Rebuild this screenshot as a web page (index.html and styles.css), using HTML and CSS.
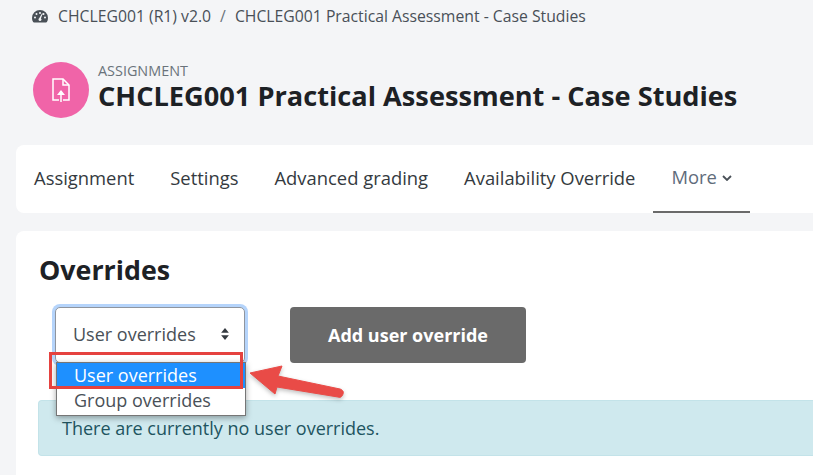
FILE: index.html
```html
<!DOCTYPE html>
<html lang="en">

<head>
    <meta charset="UTF-8">
    <title>Overrides</title>
    <link rel="stylesheet" href="styles.css">
</head>

<body>
    <div class="page">
        <div class="breadcrumb">
            <svg class="crumb-icon" viewBox="0 0 16 14" width="16" height="14">
                <path fill="#495057" fill-rule="evenodd" d="M8 1a8 8 0 0 0-8 8c0 1.500.4 2.900 1.100 4 .2.300.5.500.9.500h12c.4 0 .7-.2.900-.5.700-1.100 1.100-2.500 1.100-4a8 8 0 0 0-8-8zM8 3a1 1 0 1 1 0 2 1 1 0 0 1 0-2zM3 9.500a1 1 0 1 1 0-2 1 1 0 0 1 0 2zM4.500 6a1 1 0 1 1 0-2 1 1 0 0 1 0 2zM13 9.500a1 1 0 1 1 0-2 1 1 0 0 1 0 2zM11.500 6a1 1 0 1 1 0-2 1 1 0 0 1 0 2zM9.500 10.500a1.500 1.500 0 1 1-2.300-1.300L10 4.500l.6.300-1.700 4.700c.4.200.6.600.6 1z"/>
            </svg>
            <span>CHCLEG001 (R1) v2.0</span>
            <span class="crumb-sep">/</span>
            <span>CHCLEG001 Practical Assessment - Case Studies</span>
        </div>

        <div class="heading">
            <div class="activity-icon">
                <svg viewBox="0 0 20 26" width="20" height="26" fill="none" stroke="#fff" stroke-width="1.500">
                    <path d="M8 23H2V2h10l6 6v15h-6"/>
                    <path d="M12 2v6h6"/>
                    <path d="M10 25V14"/>
                    <path d="M10 13l-4 5h8z" fill="#fff" stroke="none"/>
                </svg>
            </div>
            <div>
                <div class="activity-type">ASSIGNMENT</div>
                <h1>CHCLEG001 Practical Assessment - Case Studies</h1>
            </div>
        </div>

        <div class="tabs">
            <a class="tab">Assignment</a>
            <a class="tab">Settings</a>
            <a class="tab">Advanced grading</a>
            <a class="tab">Availability Override</a>
            <a class="tab tab-more">More
                <svg class="more-caret" viewBox="0 0 10 6" width="10" height="6" fill="none" stroke="#495057" stroke-width="1.800">
                    <path d="M1 1l4 4 4-4"/>
                </svg>
            </a>
        </div>

        <div class="card">
            <h2>Overrides</h2>
            <div class="controls">
                <div class="select-wrap">
                    <div class="select">
                        <span>User overrides</span>
                        <svg viewBox="0 0 10 14" width="10" height="12" fill="#343a40">
                            <path d="M5 0l4.500 5.500h-9z"/>
                            <path d="M5 14L.5 8.500h9z"/>
                        </svg>
                    </div>
                    <div class="select-list">
                        <div class="option option-active">User overrides</div>
                        <div class="option">Group overrides</div>
                    </div>
                    <div class="highlight"></div>
                </div>
                <button class="add-btn">Add user override</button>
            </div>
            <div class="notice">There are currently no user overrides.</div>
        </div>
    </div>

    <svg class="arrow" viewBox="0 0 100 40" width="100" height="40">
        <path fill="#e94b47" stroke="#e94b47" stroke-width="1" stroke-linejoin="round" d="M1 9L33 2l-4 10 62 13c3 1 4 3 3 5-1 3-3 4-5 3L28 23l-2 7z"/>
    </svg>
</body>

</html>
```

FILE: styles.css
```css
body {
    margin: 0;
    height: 475px;
    overflow: hidden;
    background: #f4f5f7;
    color: #1d2125;
    font-family: 'Open Sans', sans-serif;
    font-size: 18px;
}

.page {
    padding-left: 16px;
}

.breadcrumb {
    display: flex;
    align-items: center;
    height: 32px;
    padding-left: 16px;
    font-size: 15.750px;
    color: #495057;
}

.crumb-icon {
    margin-right: 10px;
}

.crumb-sep {
    margin: 0 9px;
    color: #6a737b;
}

.heading {
    display: flex;
    align-items: flex-start;
    margin-top: 30px;
    padding-left: 17px;
    height: 56px;
}

.activity-icon {
    display: flex;
    align-items: center;
    justify-content: center;
    width: 56px;
    height: 56px;
    margin-right: 9px;
    background: #f064a8;
    border-radius: 50%;
}

.activity-type {
    font-size: 14.400px;
    line-height: 18px;
    color: #6a737b;
}

h1 {
    margin: 0;
    font-size: 27.200px;
    line-height: 32px;
    font-weight: 700;
}

.tabs {
    display: flex;
    height: 68px;
    margin-top: 27px;
    background: #fff;
    border-radius: 8px 0 0 8px;
}

.tab {
    display: flex;
    align-items: center;
    padding: 0 18px 4px;
    font-size: 18.400px;
    color: #343a40;
}

.tab-more {
    gap: 5px;
    color: #5f6c7b;
    border-bottom: 2px solid #6a6a6a;
    padding-bottom: 4px;
    height: 62px;
}

.more-caret {
    margin-top: 3px;
}

.card {
    box-sizing: border-box;
    margin-top: 18px;
    height: 244px;
    padding: 21px 0 0 23px;
    background: #fff;
    border-radius: 8px 0 0 0;
}

h2 {
    margin: 0;
    font-size: 26.800px;
    line-height: 36px;
    font-weight: 700;
}

.controls {
    display: flex;
    margin-top: 19px;
    padding-left: 16px;
}

.select-wrap {
    position: relative;
    width: 190px;
}

.select {
    display: flex;
    align-items: center;
    justify-content: space-between;
    box-sizing: border-box;
    height: 56px;
    padding: 0 14px 2px 17px;
    border: 1px solid #8f959e;
    border-radius: 5px;
    box-shadow: 0 0 0 3px #b5d4fb;
    background: #fff;
    color: #495057;
    font-size: 18px;
}

.select-list {
    position: absolute;
    top: 55px;
    left: 1px;
    width: 188px;
    padding-bottom: 2px;
    border: 1px solid #767676;
    background: #fff;
    box-shadow: 0 2px 6px rgba(0, 0, 0, 0.35);
    font-size: 18px;
    color: #495057;
}

.option {
    height: 25px;
    line-height: 24px;
    padding-left: 17px;
}

.option-active {
    background: #1e90ff;
    color: #fff;
}

.highlight {
    position: absolute;
    top: 45px;
    left: -6px;
    width: 188px;
    height: 31px;
    border: 3px solid #e5423f;
}

.add-btn {
    width: 236px;
    height: 56px;
    margin-left: 45px;
    background: #6a6a6a;
    color: #fff;
    border: none;
    border-radius: 4px;
    font-family: 'Open Sans', sans-serif;
    font-size: 18px;
    font-weight: 700;
}

.notice {
    box-sizing: border-box;
    height: 56px;
    margin: 37px 0 0 -1px;
    padding: 15px 0 0 23px;
    background: #cfe9ee;
    border: 1px solid #c3e3e9;
    border-right: none;
    border-radius: 4px 0 0 4px;
    color: #21545f;
    font-size: 18px;
    line-height: 24px;
}

.arrow {
    position: absolute;
    left: 249px;
    top: 364px;
    filter: drop-shadow(0 2px 2px rgba(0, 0, 0, 0.25));
}
```
